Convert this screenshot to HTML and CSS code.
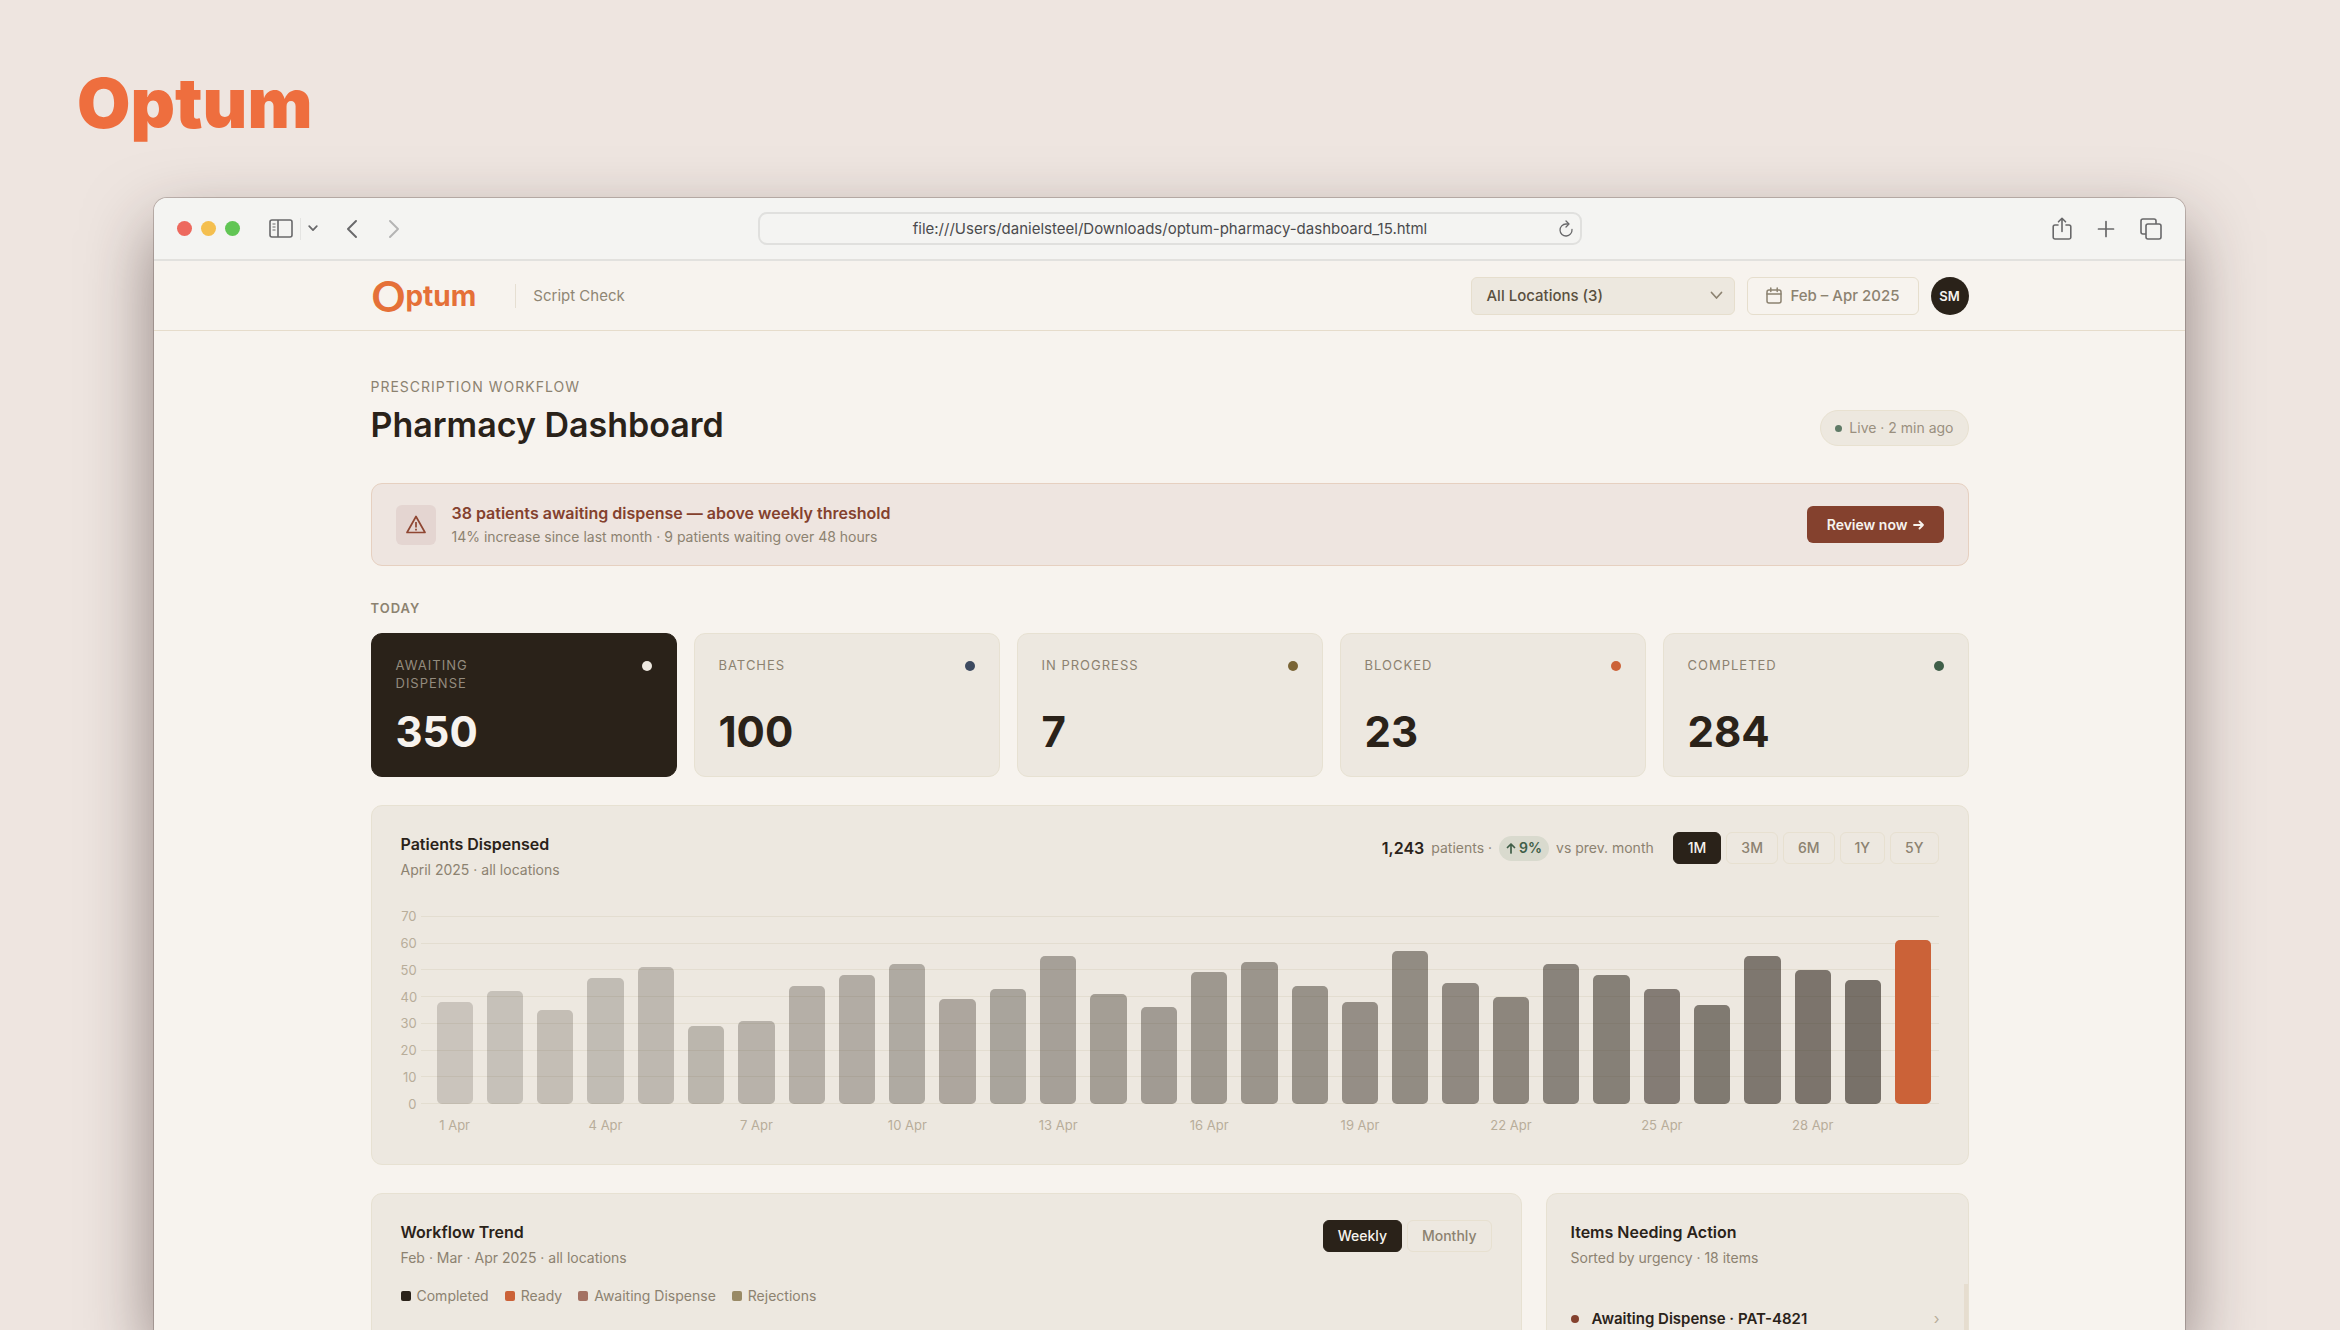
FILE: index.html
```
<!DOCTYPE html>
<html lang="en">
<head>
    <meta charset="UTF-8">
    <meta name="viewport" content="width=device-width, initial-scale=1.0">
    <title>Pharmacy Dashboard</title>
    <link rel="stylesheet" href="styles.css">
</head>
<body>
    <div class="brand">Optum</div>

    <div class="window">
        <div class="toolbar">
            <div class="toolbar-left">
                <div class="lights">
                    <span class="light red"></span>
                    <span class="light yellow"></span>
                    <span class="light green"></span>
                </div>
                <div class="sidebar-tools">
                    <button class="icon-btn" aria-label="Sidebar">
                        <svg width="24" height="20" viewBox="0 0 24 20" fill="none" stroke="currentColor" stroke-width="1.6">
                            <rect x="1" y="1" width="22" height="17" rx="2"/>
                            <path d="M9 1v17"/>
                            <path d="M3.500 5h3M3.500 8h3M3.500 11h3" stroke-width="1.2"/>
                        </svg>
                    </button>
                    <span class="tool-line"></span>
                    <button class="icon-btn" aria-label="Tab groups">
                        <svg width="10" height="7" viewBox="0 0 10 7" fill="none" stroke="currentColor" stroke-width="1.7" stroke-linecap="round" stroke-linejoin="round">
                            <path d="M1.200 1.200L5 5.200l3.800-4"/>
                        </svg>
                    </button>
                </div>
                <div class="nav-tools">
                    <button class="icon-btn" aria-label="Back">
                        <svg width="12" height="18" viewBox="0 0 12 18" fill="none" stroke="currentColor" stroke-width="1.9" stroke-linecap="round" stroke-linejoin="round">
                            <path d="M10 1L2 9l8 8"/>
                        </svg>
                    </button>
                    <button class="icon-btn faded" aria-label="Forward">
                        <svg width="12" height="18" viewBox="0 0 12 18" fill="none" stroke="currentColor" stroke-width="1.9" stroke-linecap="round" stroke-linejoin="round">
                            <path d="M2 1l8 8-8 8"/>
                        </svg>
                    </button>
                </div>
            </div>
            <div class="address">
                <input type="text" aria-label="Address" value="file:///Users/danielsteel/Downloads/optum-pharmacy-dashboard_15.html">
                <button class="icon-btn" aria-label="Reload">
                    <svg width="14" height="17" viewBox="0 0 14 17" fill="none" stroke="currentColor" stroke-width="1.3" stroke-linecap="round" stroke-linejoin="round">
                        <path d="M13 9.500A6 6 0 1 1 7 4h2.500"/>
                        <path d="M7 1l3 3-3 3"/>
                    </svg>
                </button>
            </div>
            <div class="toolbar-right">
                <button class="icon-btn" aria-label="Share">
                    <svg width="20" height="24" viewBox="0 0 20 24" fill="none" stroke="currentColor" stroke-width="1.6" stroke-linecap="round" stroke-linejoin="round">
                        <path d="M6 8H3a1.800 1.800 0 0 0-1.800 1.800v10.400A1.800 1.800 0 0 0 3 22h14a1.800 1.800 0 0 0 1.800-1.800V9.800A1.800 1.800 0 0 0 17 8h-3"/>
                        <path d="M10 14.500V1.500M6.500 4.800L10 1.300l3.500 3.500"/>
                    </svg>
                </button>
                <button class="icon-btn" aria-label="New tab">
                    <svg width="18" height="18" viewBox="0 0 18 18" fill="none" stroke="currentColor" stroke-width="1.7" stroke-linecap="round">
                        <path d="M9 1.500v15M1.500 9h15"/>
                    </svg>
                </button>
                <button class="icon-btn" aria-label="Tabs">
                    <svg width="22" height="22" viewBox="0 0 22 22" fill="none" stroke="currentColor" stroke-width="1.6" stroke-linejoin="round">
                        <rect x="6" y="6" width="15" height="15" rx="2"/>
                        <path d="M6 16H3a2 2 0 0 1-2-2V3a2 2 0 0 1 2-2h11a2 2 0 0 1 2 2v3"/>
                    </svg>
                </button>
            </div>
        </div>

        <header class="header">
            <div class="container header-inner">
                <a class="logo" href="#"><span class="logo-o">O</span>ptum</a>
                <span class="product">Script Check</span>
                <div class="header-actions">
                    <div class="location">
                        <select aria-label="Location">
                            <option>All Locations (3)</option>
                        </select>
                        <svg width="13" height="9" viewBox="0 0 13 9" fill="none" stroke="currentColor" stroke-width="1.700" stroke-linecap="round" stroke-linejoin="round">
                            <path d="M1.500 1.500l5 5.500 5-5.500"/>
                        </svg>
                    </div>
                    <button class="date-btn">
                        <svg width="16" height="17" viewBox="0 0 16 17" fill="none" stroke="currentColor" stroke-width="1.500" stroke-linecap="round">
                            <rect x="1" y="3" width="14" height="13" rx="2"/>
                            <path d="M1 7h14M4.800 1v3.500M11.200 1v3.500"/>
                        </svg>
                        Feb – Apr 2025
                    </button>
                    <button class="avatar">SM</button>
                </div>
            </div>
        </header>

        <main class="container">
            <div class="page-head">
                <div>
                    <p class="eyebrow">PRESCRIPTION WORKFLOW</p>
                    <h1>Pharmacy Dashboard</h1>
                </div>
                <div class="live">Live · 2 min ago</div>
            </div>

            <section class="alert">
                <div class="alert-icon">
                    <svg width="20" height="19" viewBox="0 0 20 19" fill="none" stroke="currentColor" stroke-width="1.700" stroke-linejoin="round">
                        <path d="M10 1.500L19 17.500H1z"/>
                        <path d="M10 7v5.500M10 13.800v1.700"/>
                    </svg>
                </div>
                <div>
                    <h2>38 patients awaiting dispense — above weekly threshold</h2>
                    <p>14% increase since last month · 9 patients waiting over 48 hours</p>
                </div>
                <button class="review">Review now
                    <svg width="11" height="10" viewBox="0 0 11 10" fill="none" stroke="currentColor" stroke-width="1.800" stroke-linecap="round" stroke-linejoin="round">
                        <path d="M1 5h9M6.500 1.500L10 5 6.500 8.500"/>
                    </svg>
                </button>
            </section>

            <h2 class="section-label">TODAY</h2>
            <section class="stats">
                <div class="stat dark">
                    <div class="stat-top"><span>AWAITING<br>DISPENSE</span><i class="dot cream"></i></div>
                    <strong>350</strong>
                </div>
                <div class="stat">
                    <div class="stat-top"><span>BATCHES</span><i class="dot navy"></i></div>
                    <strong>100</strong>
                </div>
                <div class="stat">
                    <div class="stat-top"><span>IN PROGRESS</span><i class="dot olive"></i></div>
                    <strong>7</strong>
                </div>
                <div class="stat">
                    <div class="stat-top"><span>BLOCKED</span><i class="dot orange"></i></div>
                    <strong>23</strong>
                </div>
                <div class="stat">
                    <div class="stat-top"><span>COMPLETED</span><i class="dot forest"></i></div>
                    <strong>284</strong>
                </div>
            </section>

            <section class="panel dispensed">
                <div class="panel-head">
                    <div>
                        <h3>Patients Dispensed</h3>
                        <p>April 2025 · all locations</p>
                    </div>
                    <div class="summary">
                        <b>1,243</b>
                        <span>patients ·</span>
                        <span class="growth">
                            <svg width="10" height="11" viewBox="0 0 10 11" fill="none" stroke="currentColor" stroke-width="1.700" stroke-linecap="round" stroke-linejoin="round">
                                <path d="M5 10V1M1.500 4.500L5 1l3.500 3.500"/>
                            </svg>
                            9%
                        </span>
                        <span>vs prev. month</span>
                        <div class="tabs">
                            <button class="active">1M</button>
                            <button>3M</button>
                            <button>6M</button>
                            <button>1Y</button>
                            <button>5Y</button>
                        </div>
                    </div>
                </div>

                <div class="chart">
                    <div class="y-axis">
                        <span>70</span><span>60</span><span>50</span><span>40</span><span>30</span><span>20</span><span>10</span><span>0</span>
                    </div>
                    <div class="plot">
                        <div class="grid-lines">
                            <i></i><i></i><i></i><i></i><i></i><i></i><i></i><i></i>
                        </div>
                        <div class="bars">
                            <i style="--v:38;--n:0"></i>
                            <i style="--v:42;--n:1"></i>
                            <i style="--v:35;--n:2"></i>
                            <i style="--v:47;--n:3"></i>
                            <i style="--v:51;--n:4"></i>
                            <i style="--v:29;--n:5"></i>
                            <i style="--v:31;--n:6"></i>
                            <i style="--v:44;--n:7"></i>
                            <i style="--v:48;--n:8"></i>
                            <i style="--v:52;--n:9"></i>
                            <i style="--v:39;--n:10"></i>
                            <i style="--v:43;--n:11"></i>
                            <i style="--v:55;--n:12"></i>
                            <i style="--v:41;--n:13"></i>
                            <i style="--v:36;--n:14"></i>
                            <i style="--v:49;--n:15"></i>
                            <i style="--v:53;--n:16"></i>
                            <i style="--v:44;--n:17"></i>
                            <i style="--v:38;--n:18"></i>
                            <i style="--v:57;--n:19"></i>
                            <i style="--v:45;--n:20"></i>
                            <i style="--v:40;--n:21"></i>
                            <i style="--v:52;--n:22"></i>
                            <i style="--v:48;--n:23"></i>
                            <i style="--v:43;--n:24"></i>
                            <i style="--v:37;--n:25"></i>
                            <i style="--v:55;--n:26"></i>
                            <i style="--v:50;--n:27"></i>
                            <i style="--v:46;--n:28"></i>
                            <i class="latest" style="--v:61;--n:29"></i>
                        </div>
                    </div>
                    <div class="x-axis">
                        <span>1 Apr</span><span>4 Apr</span><span>7 Apr</span><span>10 Apr</span><span>13 Apr</span>
                        <span>16 Apr</span><span>19 Apr</span><span>22 Apr</span><span>25 Apr</span><span>28 Apr</span>
                    </div>
                </div>
            </section>

            <div class="bottom-row">
                <section class="panel trend">
                    <div class="panel-head">
                        <div>
                            <h3>Workflow Trend</h3>
                            <p>Feb · Mar · Apr 2025 · all locations</p>
                        </div>
                        <div class="tabs">
                            <button class="active">Weekly</button>
                            <button>Monthly</button>
                        </div>
                    </div>
                    <ul class="legend">
                        <li class="completed">Completed</li>
                        <li class="ready">Ready</li>
                        <li class="awaiting">Awaiting Dispense</li>
                        <li class="rejections">Rejections</li>
                    </ul>
                </section>

                <section class="panel actions">
                    <h3>Items Needing Action</h3>
                    <p>Sorted by urgency · 18 items</p>
                    <div class="action-list">
                        <a class="action" href="#">
                            <i class="dot rust"></i>
                            <span>Awaiting Dispense · PAT-4821</span>
                            <span class="chevron">›</span>
                        </a>
                    </div>
                </section>
            </div>
        </main>
    </div>
</body>
</html>
```

FILE: styles.css
```
* {
    box-sizing: border-box;
}
body {
    margin: 0;
    height: 100vh;
    overflow: hidden;
    display: flex;
    flex-direction: column;
    background: #eee5e0;
    color: #2a2219;
    font-family: Inter, "Liberation Sans", sans-serif;
    font-size: 14px;
    line-height: 20px;
}
h1, h2, h3, p, ul {
    margin: 0;
    padding: 0;
}
button, input, select {
    font: inherit;
    color: inherit;
    margin: 0;
    padding: 0;
    border: 0;
    background: none;
}
svg {
    display: block;
    flex: none;
}
.brand {
    flex: none;
    height: 198px;
    padding: 65px 77px 0;
    font-size: 69px;
    line-height: 76px;
    font-weight: 900;
    color: #ee6e3e;
}

/* browser window */
.window {
    flex: 1;
    min-height: 0;
    margin: 0 155px 0 154px;
    overflow: hidden;
    border-radius: 13px 13px 0 0;
    background: #f7f3ee;
    box-shadow: 0 0 0 1px rgba(60, 45, 40, 0.25), 0 30px 68px rgba(50, 30, 30, 0.5);
}
.toolbar {
    display: grid;
    grid-template-columns: 1fr 824px 1fr;
    align-items: center;
    height: 63px;
    padding: 0 23px;
    background: #f4f4f2;
    border-bottom: 2px solid #e2e1de;
    color: #68686a;
}
.toolbar-left, .lights, .sidebar-tools, .nav-tools, .toolbar-right {
    display: flex;
    align-items: center;
}
.lights {
    gap: 9px;
}
.light {
    width: 15px;
    height: 15px;
    border-radius: 50%;
}
.red {
    background: #ed695e;
}
.yellow {
    background: #f4bf4f;
}
.green {
    background: #61c554;
}
.sidebar-tools {
    margin-left: 29px;
    gap: 7px;
}
.tool-line {
    width: 1px;
    height: 22px;
    background: #e4e4e2;
}
.nav-tools {
    margin-left: 28px;
    gap: 30px;
}
.faded {
    color: #b4b4b4;
}
.address {
    display: flex;
    align-items: center;
    height: 33px;
    padding: 0 7px 0 22px;
    border: 2px solid #e0e0de;
    border-radius: 9px;
}
.address input {
    flex: 1;
    font-size: 15px;
    text-align: center;
    color: #4b4b4d;
}
.toolbar-right {
    justify-content: flex-end;
    gap: 25px;
}

/* app header */
.container {
    max-width: 1646px;
    margin: 0 auto;
    padding: 0 24px;
}
.header {
    border-bottom: 1px solid #e6dccb;
}
.header-inner {
    display: flex;
    align-items: center;
    height: 69px;
}
.logo {
    display: flex;
    align-items: center;
    padding-left: 1px;
    color: #e57038;
    font-size: 28px;
    font-weight: 700;
    line-height: 40px;
    text-decoration: none;
}
.logo-o {
    font-family: Lato, Inter, sans-serif;
    font-size: 42px;
}
.product {
    margin-left: 39px;
    padding-left: 17px;
    border-left: 1px solid #e6dfd2;
    font-size: 15px;
    line-height: 24px;
    color: #8f8674;
}
.header-actions {
    display: flex;
    align-items: center;
    gap: 12px;
    margin-left: auto;
}
.location {
    display: grid;
    align-items: center;
    width: 264px;
    height: 38px;
    color: #8c8270;
}
.location select, .location svg {
    grid-area: 1 / 1;
}
.location select {
    appearance: none;
    height: 38px;
    padding: 0 14px;
    border: 1px solid #e6decd;
    border-radius: 6px;
    background: #ede8df;
    color: #5a5040;
    font-size: 15px;
    font-weight: 500;
}
.location svg {
    justify-self: end;
    margin-right: 12px;
    pointer-events: none;
}
.date-btn {
    display: flex;
    align-items: center;
    gap: 8px;
    height: 38px;
    padding: 0 18px;
    border: 1px solid #e6decd;
    border-radius: 6px;
    color: #8c8270;
    font-size: 15px;
    font-weight: 500;
}
.avatar {
    width: 38px;
    height: 38px;
    border-radius: 50%;
    background: #2a2219;
    color: #f7f3ee;
    font-size: 13px;
    font-weight: 600;
}

/* title block */
.page-head {
    display: flex;
    align-items: flex-end;
    justify-content: space-between;
    padding: 46px 0 37px;
}
.eyebrow {
    font-size: 14px;
    letter-spacing: 1px;
    color: #8c8270;
}
h1 {
    margin-top: 7px;
    font-size: 34px;
    line-height: 42px;
    font-weight: 600;
}
.live {
    display: flex;
    align-items: center;
    gap: 7px;
    height: 36px;
    padding: 0 14px;
    border: 1px solid #e8e1d0;
    border-radius: 18px;
    background: #ede8df;
    color: #9a907f;
}
.live::before {
    content: "";
    width: 7px;
    height: 7px;
    border-radius: 50%;
    background: #5f7a66;
}
.alert {
    display: flex;
    align-items: center;
    gap: 16px;
    height: 83px;
    padding: 0 24px;
    border: 1px solid #e6d0c0;
    border-radius: 11px;
    background: #eee5e0;
}
.alert-icon {
    display: flex;
    align-items: center;
    justify-content: center;
    width: 40px;
    height: 40px;
    border-radius: 6px;
    background: #e4d5d1;
    color: #8f4632;
}
.alert h2 {
    font-size: 16px;
    line-height: 24px;
    font-weight: 600;
    color: #84412e;
}
.alert p {
    line-height: 24px;
    color: #8c8270;
}
.review {
    display: flex;
    align-items: center;
    gap: 5px;
    height: 37px;
    margin-left: auto;
    padding: 0 20px;
    border-radius: 6px;
    background: #84412e;
    color: #f7f3ee;
    font-weight: 600;
}

/* today */
.section-label {
    margin: 32px 0 15px;
    font-size: 13px;
    font-weight: 600;
    letter-spacing: 1px;
    color: #8c8270;
}
.stats {
    display: grid;
    grid-template-columns: repeat(5, 1fr);
    gap: 17px;
}
.stat, .panel {
    border: 1px solid #e7e1d2;
    border-radius: 11px;
    background: #ede8e0;
}
.stat {
    height: 144px;
    padding: 22px 24px;
}
.stat-top {
    display: flex;
    justify-content: space-between;
    height: 54px;
    font-size: 13px;
    line-height: 18px;
    letter-spacing: 1px;
    color: #8c8270;
}
.stat strong {
    display: block;
    font-size: 42px;
    line-height: 44px;
    font-weight: 700;
}
.dark {
    background: #2a2219;
    border-color: #2a2219;
    color: #f7f3ee;
}
.dark .stat-top {
    color: #938b7e;
}
.dot {
    width: 10px;
    height: 10px;
    margin-top: 5px;
    border-radius: 50%;
}
.cream {
    background: #ede8e0;
}
.navy {
    background: #3d4a60;
}
.olive {
    background: #7a6535;
}
.orange {
    background: #cc6238;
}
.forest {
    background: #3f5e48;
}
.rust {
    background: #84412e;
}

/* panels */
.panel {
    padding: 26px 29px 0;
}
.panel-head {
    display: flex;
    justify-content: space-between;
    align-items: flex-start;
}
.panel h3 {
    font-size: 16px;
    line-height: 24px;
    font-weight: 600;
}
.panel p {
    margin-top: 2px;
    line-height: 24px;
    color: #8c8270;
}
.summary {
    display: flex;
    align-items: center;
    gap: 7px;
    color: #8c8270;
}
.summary b {
    font-size: 16px;
    font-weight: 600;
    color: #2a2219;
}
.growth {
    display: flex;
    align-items: center;
    gap: 3px;
    height: 25px;
    padding: 0 7px;
    border-radius: 13px;
    background: #d9dace;
    color: #3f5e48;
    font-weight: 600;
}
.tabs {
    display: flex;
    gap: 5px;
}
.summary .tabs {
    margin-left: 12px;
}
.tabs button {
    height: 32px;
    padding: 0 14px;
    border: 1px solid #e7e0d0;
    border-radius: 6px;
    color: #8c8270;
    font-size: 14px;
    font-weight: 500;
}
.tabs .active {
    background: #2a2219;
    border-color: #2a2219;
    color: #f7f3ee;
}

/* bar chart */
.dispensed {
    height: 360px;
    margin-top: 28px;
}
.chart {
    display: grid;
    grid-template-columns: 16px 1fr;
    column-gap: 4px;
    margin-top: 24px;
    color: #b8ad9a;
    font-size: 13px;
}
.y-axis, .grid-lines {
    display: flex;
    flex-direction: column;
    justify-content: space-between;
}
.y-axis {
    height: 208px;
    margin-bottom: -10px;
    text-align: right;
}
.plot {
    display: grid;
    height: 188px;
    margin-top: 10px;
}
.grid-lines, .bars {
    grid-area: 1 / 1;
}
.grid-lines i {
    height: 1px;
    background: #e3ddd0;
}
.bars {
    display: flex;
    align-items: flex-end;
    padding-left: 9px;
}
.bars i {
    flex: 1;
    height: calc(var(--v) / 70 * 100%);
    margin: 0 7px;
    border-radius: 5px;
    background: #2a2219;
    opacity: calc(0.18 + var(--n) * 0.015);
}
.bars .latest {
    background: #cb6238;
    opacity: 1;
}
.x-axis {
    grid-column: 2;
    display: grid;
    grid-template-columns: repeat(30, 1fr);
    margin-top: 11px;
    padding-left: 9px;
    white-space: nowrap;
}
.x-axis span {
    grid-column: span 3;
    width: 33.3333%;
    display: flex;
    justify-content: center;
}

/* bottom row */
.bottom-row {
    display: grid;
    grid-template-columns: 1fr 423px;
    gap: 24px;
    margin-top: 28px;
}
.bottom-row .panel {
    min-height: 420px;
}
.legend {
    display: flex;
    gap: 16px;
    margin-top: 16px;
    list-style: none;
    color: #8c8270;
}
.legend li {
    display: flex;
    align-items: center;
    gap: 6px;
}
.legend li::before {
    content: "";
    width: 10px;
    height: 10px;
    border-radius: 2px;
    background: #2a2219;
}
.legend .ready::before {
    background: #cb6238;
}
.legend .awaiting::before {
    background: #a47263;
}
.legend .rejections::before {
    background: #998a66;
}
.actions {
    padding: 26px 0 0;
}
.actions h3, .actions p {
    padding: 0 24px;
}
.action-list {
    height: 300px;
    margin-top: 14px;
    border-right: 4px solid #e6ddcf;
}
.action {
    display: flex;
    align-items: center;
    gap: 13px;
    padding: 25px 24px 0;
    color: #2a2219;
    font-size: 15px;
    font-weight: 600;
    text-decoration: none;
}
.action .dot {
    width: 8px;
    height: 8px;
    margin: 0;
}
.chevron {
    margin-left: auto;
    color: #b8ad9a;
    font-weight: 400;
}
```
